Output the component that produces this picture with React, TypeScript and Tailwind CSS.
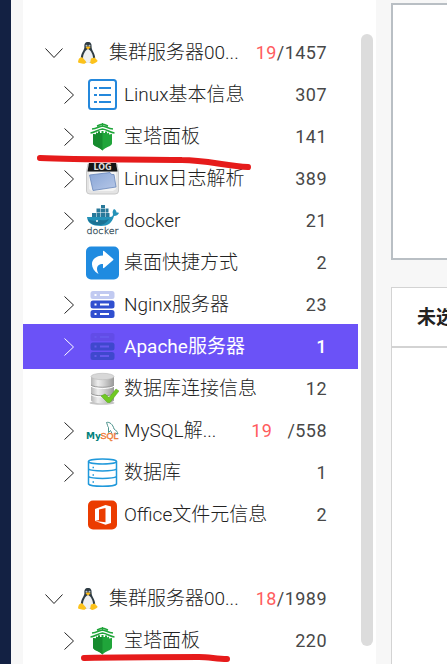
import type { ReactNode } from "react";

function Tux() {
  return (
    <svg width="22" height="24" viewBox="0 0 22 24" aria-hidden="true">
      <path d="M11 1C8 1 7.2 3 7.4 6C7.5 9 4 12 3.8 17C4 20 7 22 11 22C15 22 18 20 18.2 17C18 12 14.6 9.500 14.600 6C14.700 3 14 1 11 1Z" fill="#2f3c44" />
      <path d="M11 8C8.500 9 6 13 6 17C6 21 8 22 11 22C14 22 16 21 16 17C16 13 13.500 9 11 8Z" fill="#eef0f2" />
      <circle cx="9.500" cy="4.700" r="1" fill="#b8c0c4" />
      <circle cx="12.500" cy="4.700" r="1" fill="#b8c0c4" />
      <path d="M8.500 6.500L11 5.300L13.700 6.500L11 8.500Z" fill="#fcb913" />
      <path d="M2 17.500L5 16L9 20.500C9 22 8 23 6 22.800L1.500 21.800C.5 21 1.500 19 2 17.500Z" fill="#fcc21b" />
      <path d="M14 17.500L17.500 16.500L20.500 19.500C21 20.500 19 21.500 17 22.500C15 23.500 13 22.500 13.300 20.500Z" fill="#fcc21b" />
    </svg>
  );
}

function ListIcon() {
  return (
    <svg width="33" height="34" viewBox="0 0 33 34" fill="none" stroke="#2488dc" strokeWidth="2" aria-hidden="true">
      <rect x="3" y="2" width="27" height="29" rx="2.500" />
      <path d="M8 10h3M13 10h12M8 17h3M13 17h12M8 24h3M13 24h12" />
    </svg>
  );
}

function Pagoda() {
  return (
    <svg width="33" height="34" viewBox="0 0 33 34" aria-hidden="true">
      <path d="M7 14L10 14.500V12.500L12 13.500V11.500H14V13H15.500V11H17.500V13H19V11.500H21V13.500L23 12.500V14.500L26 14V23.500C25 27 20 26.500 16.500 30.500C13 26.500 8 27 7 23.500Z" fill="#20a53a" />
      <path d="M7 14L10 14.500V12.500L12 13.500V11.500H14V13H16.500V30.500C13 26.500 8 27 7 23.500Z" fill="#168b2e" />
      <path d="M4.500 13C9 12.500 12 9.500 16.500 9C21 9.500 24 12.500 28.500 13M6 9C11 8.500 13 6.500 16.500 6C20 6.500 22 8.500 27 9M11 6L16.500 3.800L22 6M16.500 3v3" fill="none" stroke="#20a53a" strokeWidth="1.500" />
    </svg>
  );
}

function LogIcon() {
  return (
    <svg width="33" height="34" viewBox="0 0 33 34" aria-hidden="true">
      <defs>
        <linearGradient id="logPaper" x2="1" y2="1">
          <stop stopColor="#88a5d6" />
          <stop offset="1" stopColor="#b7c8e8" />
        </linearGradient>
      </defs>
      <path d="M2 2H31L32.500 10V29Q32.500 32 29 32H4Q.5 32 .5 29V10Z" fill="#e4e4e4" stroke="#c9c9c9" />
      <path d="M3 10h27v17l-3 2H6l-3-2Z" fill="#f4f4f4" />
      <path d="M3.500 13L24 10.500 25.500 12.500H28L30 25 7 28.500Z" fill="url(#logPaper)" stroke="#6886ba" strokeWidth=".8" />
      <path d="M3 1h27l1.500 8.500h-30Z" fill="#151515" />
      <text x="16.500" y="8" textAnchor="middle" fontFamily="DejaVu Sans, sans-serif" fontSize="8" fontWeight="700" fill="#ddd">LOG</text>
    </svg>
  );
}

function DockerIcon() {
  return (
    <svg width="33" height="34" viewBox="0 0 33 34" aria-hidden="true">
      <path d="M1 13h23c2 0 3-1 3-3-1-2 0-4 1-5 2 1 2.500 2.500 2.500 3.500 1 0 2 0 2.500.5-1 2-2.500 3-5 3-2 7-6 10-13 10C6 22 1.500 19 1 13Z" fill="#2492b8" />
      <path d="M2 15c3 2 8 2 12 1 3 0 5 1 9-1-3 5-7 6-10 6C7 21 3 19 2 15Z" fill="#1b7294" />
      <path d="M6 9h4v4H6ZM10.500 9h4v4h-4ZM15 9h4v4h-4ZM19.500 9h4v4h-4ZM10.500 4.500h4v4h-4ZM15 4.500h4v4h-4ZM19.500 4.500h3v4h-3ZM15 1h4v3h-4Z" fill="#28799a" />
      <circle cx="11" cy="17" r="1" fill="#fff" />
      <text x="16.500" y="30" textAnchor="middle" fontFamily="DejaVu Sans, sans-serif" fontSize="9.500" fill="#344e59" stroke="#344e59" strokeWidth=".3">docker</text>
    </svg>
  );
}

function ShortcutIcon() {
  return (
    <svg width="33" height="34" viewBox="0 0 33 34" aria-hidden="true">
      <rect y=".5" width="33" height="33" rx="5" fill="#208be0" />
      <path d="M17 5.500Q17 4.500 18 5L27 12.800Q27.800 13.500 27 14.300L18 22Q17 22.500 17 21.500V18C11 18 9.500 22 12.500 28C2.500 22 4 10 17 9.500Z" fill="#fff" />
    </svg>
  );
}

function ServerIcon({ dim }: { dim?: boolean }) {
  const main = dim ? "#3f48cd" : "#304fcf";
  const mark = dim ? "#6657ed" : "#fff";
  return (
    <svg width="33" height="34" viewBox="0 0 33 34" aria-hidden="true">
      <rect x="4.500" y="3" width="24" height="8" rx="2.500" fill={dim ? "#624ce7" : "#c1caf1"} />
      <rect x="4.500" y="12.500" width="24" height="8" rx="2.500" fill={main} />
      <rect x="4.500" y="22" width="24" height="8" rx="2.500" fill={main} />
      <path d="M8.500 7h2M14 7h9M8.500 16.500h2M14 16.500h9M8.500 26h2M14 26h9" stroke={mark} strokeWidth="2.200" />
    </svg>
  );
}

function DataCheckIcon() {
  return (
    <svg width="33" height="34" viewBox="0 0 33 34" aria-hidden="true">
      <defs>
        <linearGradient id="metal">
          <stop stopColor="#b5b5b5" />
          <stop offset=".3" stopColor="#eee" />
          <stop offset=".6" stopColor="#cdcdcd" />
          <stop offset="1" stopColor="#999" />
        </linearGradient>
      </defs>
      <ellipse cx="16" cy="31" rx="12.500" ry="1.700" fill="#c5c5c5" />
      <path d="M5 4.500v24c2 4 20 4 23 0v-24Z" fill="url(#metal)" />
      <ellipse cx="16.500" cy="4.500" rx="11.500" ry="3.200" fill="#d8d8d8" stroke="#bbb" strokeWidth=".6" />
      <path d="M5 13c3 3 20 3 23 0M5 21.500c3 3 20 3 23 0" fill="none" stroke="#999" />
      <path d="M5 14.200c3 3 20 3 23 0M5 22.700c3 3 20 3 23 0" fill="none" stroke="#fff" />
      <path d="M15 24l4-2 4 3.500 7-8.500 3 2-9 11.500h-2.500Z" fill="#70c922" stroke="#55a51c" strokeWidth=".5" />
    </svg>
  );
}

function MySqlIcon() {
  return (
    <svg width="33" height="34" viewBox="0 0 33 34" aria-hidden="true">
      <path d="M20.500 8.500c3-1 6.500 2 7.500 6.500 2 1 3.500 3 4 5l-3-1 1 2M20.500 8.500c1 2 1 4 2 5v5l2-2 1.500 3" fill="none" stroke="#39877f" strokeWidth=".9" />
      <text x="0" y="24.500" fontFamily="DejaVu Sans, sans-serif" fontSize="9" fontWeight="700" fill="#00827c">My</text>
      <text x="14.500" y="24.500" fontFamily="Liberation Sans, sans-serif" fontSize="9" fill="#ed7a36" stroke="#ed7a36" strokeWidth=".4">SQL</text>
    </svg>
  );
}

function DatabaseIcon() {
  return (
    <svg width="33" height="34" viewBox="0 0 33 34" fill="none" stroke="#2099db" strokeWidth="1.500" aria-hidden="true">
      <ellipse cx="16.500" cy="5.500" rx="14" ry="2.500" />
      <path d="M2.500 5.500v22.500c2 3 26 3 28 0V5.500M2.500 13c3 2.500 25 2.500 28 0M2.500 20.500c3 2.500 25 2.500 28 0" />
      <path d="M6.500 11.500h1.500M6.500 19h1.500M6.500 26h1.500" />
    </svg>
  );
}

function OfficeIcon() {
  return (
    <svg width="33" height="34" viewBox="0 0 33 34" aria-hidden="true">
      <rect x="2" y="2.500" width="29" height="29" rx="5" fill="#eb3c00" />
      <path d="M9 11l10.500-4L25 8.500V25l-5.500 1.800L9 23l10.500 1.200V10L13 11.500V22L9 23Z" fill="#fff" />
    </svg>
  );
}

function Chevron({ open }: { open?: boolean }) {
  return open ? (
    <svg className="mr-3.5 shrink-0" width="18" height="12" viewBox="0 0 18 12" fill="none" stroke="currentColor" aria-hidden="true">
      <path d="M.5 1.500L9 10.500L17.500 1.500" />
    </svg>
  ) : (
    <svg className="mr-[11px] shrink-0" width="12" height="18" viewBox="0 0 12 18" fill="none" stroke="currentColor" aria-hidden="true">
      <path d="M1.500 .5L10.500 9L1.500 17.500" />
    </svg>
  );
}

type Item = {
  label: string;
  count: string;
  alert?: string;
  icon: ReactNode;
  leaf?: boolean;
  selected?: boolean;
  mark?: ReactNode;
};

function Row({ item }: { item: Item }) {
  return (
    <li className="relative">
      <button
        type="button"
        className={
          item.selected
            ? "-mt-0.5 -mb-px flex h-[45px] w-full items-center bg-[#6b52f7] pt-px pr-[31px] pl-10 text-left font-normal text-white"
            : "flex h-[42px] w-full items-center pr-[31px] pl-10 text-left"
        }
      >
        {item.leaf ? <span className="w-[23px] shrink-0" /> : <Chevron />}
        <span className="mr-[5px] shrink-0">{item.icon}</span>
        <span className="flex-1 whitespace-nowrap">{item.label}</span>
        {item.alert && <span className="mr-[15px] text-lg font-normal tracking-wide text-[#ff5c5e]">{item.alert}</span>}
        <span className={item.selected ? "text-lg font-medium tracking-wide" : "text-lg font-normal tracking-wide text-[#484848]"}>{item.count}</span>
      </button>
      {item.mark}
    </li>
  );
}

function Group({ alert, count, items }: { alert: string; count: string; items: Item[] }) {
  return (
    <section>
      <button type="button" className="flex h-[42px] w-full items-center pr-[31px] pl-[22px] text-left">
        <Chevron open />
        <span className="mr-2.5 shrink-0"><Tux /></span>
        <span className="flex-1 whitespace-nowrap">集群服务器00...</span>
        <span className="text-lg font-normal tracking-wide text-[#484848]"><span className="text-[#ff5c5e]">{alert}</span>/{count}</span>
      </button>
      <ul>
        {items.map((item) => <Row key={item.label} item={item} />)}
      </ul>
    </section>
  );
}

const longMark = (
  <svg className="pointer-events-none absolute top-9 left-3.5 z-10" width="216" height="20" viewBox="0 0 216 20" fill="none" aria-hidden="true">
    <path d="M3 6C45 8 100 7 145 8C168 8 190 14 211 15" stroke="#e61b1b" strokeWidth="6" strokeLinecap="round" />
  </svg>
);

const shortMark = (
  <svg className="pointer-events-none absolute top-[31px] left-14 z-10" width="154" height="14" viewBox="0 0 154 14" fill="none" aria-hidden="true">
    <path d="M5 7C45 6 85 6 120 6C130 6 138 8 148 8" stroke="#e61b1b" strokeWidth="6" strokeLinecap="round" />
  </svg>
);

const first: Item[] = [
  { label: "Linux基本信息", count: "307", icon: <ListIcon /> },
  { label: "宝塔面板", count: "141", icon: <Pagoda />, mark: longMark },
  { label: "Linux日志解析", count: "389", icon: <LogIcon /> },
  { label: "docker", count: "21", icon: <DockerIcon /> },
  { label: "桌面快捷方式", count: "2", icon: <ShortcutIcon />, leaf: true },
  { label: "Nginx服务器", count: "23", icon: <ServerIcon /> },
  { label: "Apache服务器", count: "1", icon: <ServerIcon dim />, selected: true },
  { label: "数据库连接信息", count: "12", icon: <DataCheckIcon />, leaf: true },
  { label: "MySQL解...", alert: "19", count: "/558", icon: <MySqlIcon /> },
  { label: "数据库", count: "1", icon: <DatabaseIcon /> },
  { label: "Office文件元信息", count: "2", icon: <OfficeIcon />, leaf: true },
];

const second: Item[] = [
  { label: "宝塔面板", count: "220", icon: <Pagoda />, mark: shortMark },
];

export default function App() {
  return (
    <div className="flex min-h-screen bg-[#f7f7f7] font-['Roboto','Noto_Sans_CJK_SC',sans-serif] text-[19px] font-light text-[#222]">
      <div className="w-[11px] shrink-0 bg-[#132143]" />
      <aside className="ml-3 flex w-[353px] shrink-0 bg-white pr-[3px]">
        <nav className="mr-[3px] flex min-w-0 flex-1 flex-col gap-[42px] pt-8">
          <Group alert="19" count="1457" items={first} />
          <Group alert="18" count="1989" items={second} />
        </nav>
        <div className="mt-[34px] mb-[18px] w-3 rounded-full bg-[#dcdcdc]" />
      </aside>
      <main className="ml-[15px] flex min-w-0 flex-1 flex-col overflow-hidden">
        <div className="mt-[3px] mb-[27px] h-[257px] border-t-2 border-b-2 border-l-2 border-[#b9bfc4] bg-white" />
        <section className="flex-1 border-t border-l border-[#d3d3d3] bg-white">
          <h2 className="flex h-[60px] items-center overflow-hidden border-b-2 border-[#d3d3d3] pt-0.5 pl-[25px] font-bold whitespace-nowrap">未选择</h2>
        </section>
      </main>
    </div>
  );
}
